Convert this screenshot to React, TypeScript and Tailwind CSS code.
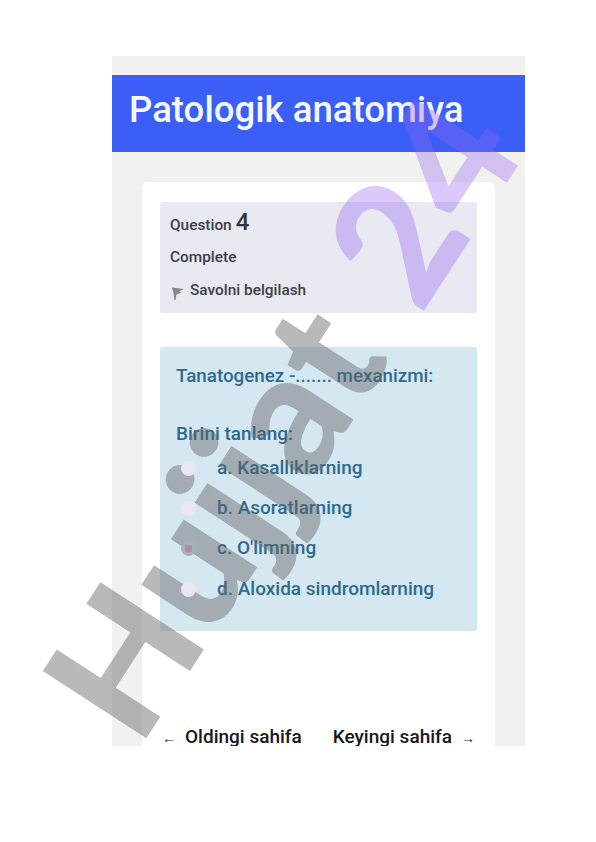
const options = [
  { label: "a. Kasalliklarning", checked: false },
  { label: "b. Asoratlarning", checked: false },
  { label: "c. O'limning", checked: true },
  { label: "d. Aloxida sindromlarning", checked: false },
];

export default function App() {
  return (
    <div className="relative w-[596px] h-[842px] overflow-hidden bg-white pt-[56px] pl-[112px] font-['Roboto',sans-serif]">
      <div className="w-[413px] h-[690px] overflow-hidden bg-[#f1f1f0] pt-[19px]">
        <header className="h-[77px] bg-[#3a5ef6] pl-[17px] pt-[13px]">
          <h1 className="text-[36.6px] leading-[44px] font-medium text-[#f4f8ff]">Patologik anatomiya</h1>
        </header>

        <main className="mt-[30px] ml-[30px] w-[353px] h-[600px] rounded-[6px] bg-white pt-[20px] px-[18px]">
          <section className="h-[111px] rounded-[2px] bg-[#e9e9f2] pl-[10px] pt-[5px] text-[15.4px] font-medium text-[#3d4046]">
            <p className="flex items-baseline gap-[4px] h-[30px]">
              Question <span className="text-[24px] leading-[30px] text-[#33363b]">4</span>
            </p>
            <p className="mt-[8px] h-[24px] leading-[24px]">Complete</p>
            <p className="mt-[12px] flex items-center gap-[5px]">
              <svg width="15" height="14" viewBox="0 0 15 14" className="mt-[3px]">
                <path d="M2 1.5 14 3 9 5.5 11.5 6.5 6.5 8.5 5.6 14H4.4L3.6 7.5Z" fill="#85878c" />
              </svg>
              <span className="-mt-[2px]">Savolni belgilash</span>
            </p>
          </section>

          <section className="mt-[34px] h-[284px] rounded-[2px] bg-[#d5e8f2] pl-[16px] pt-[17px] text-[#2f6a8e]">
            <p className="text-[18.8px] leading-[24px] font-medium">Tanatogenez -....... mexanizmi:</p>
            <p className="mt-[34px] text-[19px] leading-[24px] font-medium">Birini tanlang:</p>
            <ul className="mt-[2px]">
              {options.map((o) => (
                <li key={o.label} className="flex items-center h-[40.3px]">
                  <span
                    className={`relative z-20 w-[15px] h-[15px] rounded-full flex items-center justify-center ml-[5px] ${
                      o.checked ? "bg-[#a6b2ba]" : "bg-[#ebe7f2]"
                    }`}
                  >
                    {o.checked && <span className="w-[7px] h-[7px] rounded-[2px] bg-[#b08d9b]" />}
                  </span>
                  <span className="ml-[21px] text-[19px] font-medium">{o.label}</span>
                </li>
              ))}
            </ul>
          </section>

          <nav className="mt-[94px] mx-[2px] flex justify-between text-[19px] leading-[24px] font-medium text-[#17181a]">
            <span>
              <span className="text-[14px] font-normal mr-[9px]">←</span>Oldingi sahifa
            </span>
            <span>
              Keyingi sahifa<span className="text-[14px] font-normal ml-[9px]">→</span>
            </span>
          </nav>
        </main>
      </div>

      {/* watermark sits over the page */}
      <div className="absolute z-10 left-[84px] top-[713px] h-0 leading-[0] origin-left rotate-[-57deg] whitespace-nowrap pointer-events-none text-[170px] font-black font-['Lato',sans-serif]">
        <span className="text-[#64646473]">Hujjat</span>
        <span className="text-[#9664f059] ml-[52px]">24</span>
      </div>
    </div>
  );
}
